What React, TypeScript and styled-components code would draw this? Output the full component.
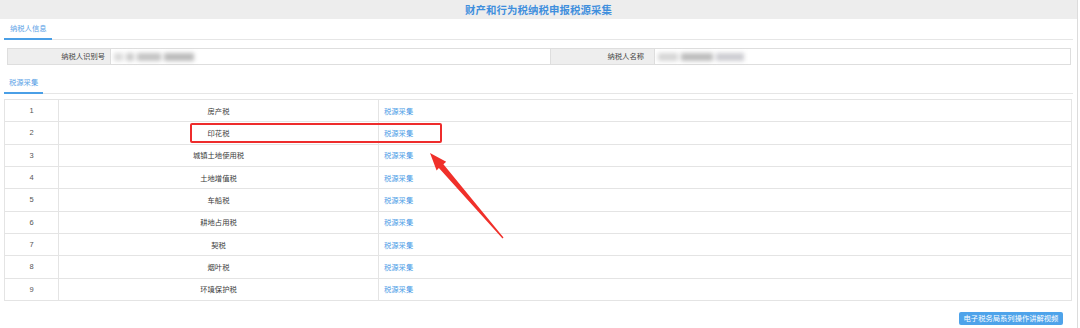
import React from "react";
import styled, { createGlobalStyle } from "styled-components";

const GlobalStyle = createGlobalStyle`
  html, body { margin: 0; padding: 0; background: #fff; }
  body {
    width: 1080px; height: 328px; overflow: hidden;
    font-family: "Noto Sans CJK SC", "Noto Sans", sans-serif;
    -webkit-font-smoothing: antialiased;
  }
  * { box-sizing: border-box; }
`;

const Page = styled.div`
  position: relative;
  width: 1078px;
  height: 328px;
  border-right: 1px solid #dcdcdc;
`;

const Header = styled.div`
  height: 19px;
  background: #ededed;
  text-align: center;
  line-height: 19px;
  font-size: 10.4px;
  font-weight: 700;
  color: #3f8fdd;
  letter-spacing: 0.1px;
`;

const Content = styled.div`
  padding: 0 4px;
`;

const TabBar = styled.div<{ $top: number }>`
  display: flex;
  margin-top: ${(p) => p.$top}px;
  border-bottom: 1px solid #e6e6e6;
`;

const Tab = styled.div<{ $pad: number }>`
  padding: 0 ${(p) => p.$pad}px 3px;
  line-height: 14px;
  font-size: 7.3px;
  color: #5aa2e6;
  border-bottom: 2px solid #4a9fe6;
  margin-bottom: -1px;
`;

const InfoBox = styled.div`
  display: grid;
  grid-template-columns: 103px 440px 104px 1fr;
  margin: 8px 2px 0 3px;
  height: 17px;
  border: 1px solid #dedede;
`;

const InfoLabel = styled.div<{ $pr: number }>`
  background: #eeeeee;
  text-align: right;
  padding-right: ${(p) => p.$pr}px;
  font-size: 7.3px;
  line-height: 15px;
  color: #444;
  border-right: 1px solid #dedede;
`;

const InfoValue = styled.div<{ $last?: boolean }>`
  display: flex;
  align-items: center;
  padding-left: 3px;
  border-right: ${(p) => (p.$last ? "none" : "1px solid #dedede")};
`;

const Blur = styled.div`
  display: flex;
  gap: 3px;
  height: 8px;
  filter: blur(2px);
`;

const BlurBlock = styled.span<{ $w: number; $c: string }>`
  display: block;
  width: ${(p) => p.$w}px;
  height: 8px;
  background: ${(p) => p.$c};
`;

const Table = styled.table`
  width: 1068px;
  margin-top: 5px;
  border-collapse: collapse;
  table-layout: fixed;
`;

const Row = styled.tr`
  height: 22.33px;
`;

const Cell = styled.td<{ $align: "center" | "left"; $w?: number }>`
  border: 1px solid #e4e4e4;
  padding: 0;
  padding-left: ${(p) => (p.$align === "left" ? "5px" : "0")};
  text-align: ${(p) => p.$align};
  font-size: 7.3px;
  color: #3a3a3a;
  ${(p) => (p.$w ? `width: ${p.$w}px;` : "")}
`;

const NumCell = styled(Cell)`
  color: #555;
  font-family: "Liberation Sans", "Noto Sans", sans-serif;
  font-size: 7.5px;
`;

const Link = styled.a`
  color: #4a9be6;
  text-decoration: none;
  cursor: pointer;
`;

const Footer = styled.div`
  display: flex;
  justify-content: flex-end;
  padding-right: 10px;
  margin-top: 11px;
`;

const VideoButton = styled.button`
  height: 13px;
  width: 104px;
  padding: 0;
  border: none;
  border-radius: 2px;
  background: #4ea3ea;
  color: #fff;
  font-family: inherit;
  font-size: 7.3px;
  line-height: 13px;
  cursor: pointer;
`;

const Highlight = styled.div`
  position: absolute;
  left: 190px;
  top: 123px;
  width: 252px;
  height: 20px;
  border: 2px solid #ee2c2c;
  border-radius: 2px;
  pointer-events: none;
`;

const ArrowSvg = styled.svg`
  position: absolute;
  left: 0;
  top: 0;
  pointer-events: none;
`;

const taxes = [
  "房产税",
  "印花税",
  "城镇土地使用税",
  "土地增值税",
  "车船税",
  "耕地占用税",
  "契税",
  "烟叶税",
  "环境保护税",
];

export default function App() {
  return (
    <>
      <GlobalStyle />
      <Page>
        <Header>财产和行为税纳税申报税源采集</Header>
        <Content>
          <TabBar $top={2}>
            <Tab $pad={6}>纳税人信息</Tab>
          </TabBar>
          <InfoBox>
            <InfoLabel $pr={5}>纳税人识别号</InfoLabel>
            <InfoValue>
              <Blur>
                <BlurBlock $w={9} $c="#dadada" />
                <BlurBlock $w={8} $c="#cccccc" />
                <BlurBlock $w={24} $c="#c4c4c4" />
                <BlurBlock $w={30} $c="#bbbbbb" />
              </Blur>
            </InfoValue>
            <InfoLabel $pr={10}>纳税人名称</InfoLabel>
            <InfoValue $last>
              <Blur>
                <BlurBlock $w={20} $c="#d6d6d6" />
                <BlurBlock $w={32} $c="#bdbdbd" />
                <BlurBlock $w={28} $c="#cdcdd2" />
              </Blur>
            </InfoValue>
          </InfoBox>
          <TabBar $top={10}>
            <Tab $pad={5}>税源采集</Tab>
          </TabBar>
          <Table>
            <tbody>
              {taxes.map((t, i) => (
                <Row key={t}>
                  <NumCell $align="center" $w={54}>
                    {i + 1}
                  </NumCell>
                  <Cell $align="center" $w={320}>
                    {t}
                  </Cell>
                  <Cell $align="left">
                    <Link>税源采集</Link>
                  </Cell>
                </Row>
              ))}
            </tbody>
          </Table>
          <Footer>
            <VideoButton>电子税务局系列操作讲解视频</VideoButton>
          </Footer>
        </Content>
        <Highlight />
        <ArrowSvg width="1080" height="328" viewBox="0 0 1080 328">
          <polygon
            points="430,153 446.2,161.8 443.4,164.2 503.5,237.6 502.5,238.4 438.9,168 436.6,170.6"
            fill="#f0302a"
          />
        </ArrowSvg>
      </Page>
    </>
  );
}
